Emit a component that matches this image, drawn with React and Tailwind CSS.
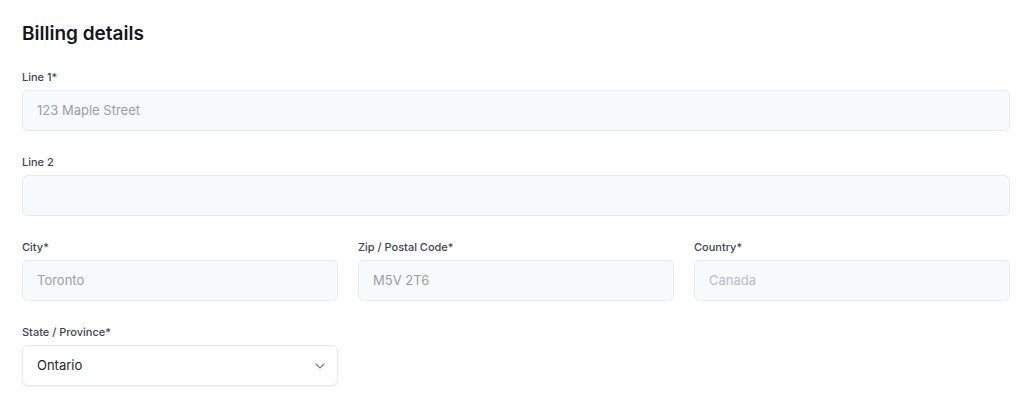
import React from "react";

function Field({ label, value, placeholder }) {
  return (
    <div className="flex flex-col">
      <label className="text-[11px] leading-4 font-medium text-[#3f4450] mb-[5px]">{label}</label>
      <div className="h-[41px] rounded-md border border-[#e8eaee] bg-[#f8f9fb] px-[14px] flex items-center text-[13px] text-[#9a9ea6]">
        {value}
        {placeholder && <span className="text-[#b9bcc2]">{placeholder}</span>}
      </div>
    </div>
  );
}

export default function App() {
  return (
    <div className="bg-white min-h-screen px-[22px] pt-[20px]" style={{ fontFamily: "Inter, 'Noto Sans', sans-serif" }}>
      <h2 className="text-[19px] leading-7 font-semibold text-[#14161c] mb-[21px]">Billing details</h2>

      <div className="flex flex-col gap-[23px]">
        <Field label="Line 1*" value="123 Maple Street" />
        <Field label="Line 2" value="" />

        <div className="grid grid-cols-3 gap-5">
          <Field label="City*" value="Toronto" />
          <Field label="Zip / Postal Code*" value="M5V 2T6" />
          <Field label="Country*" placeholder="Canada" />
        </div>

        <div className="grid grid-cols-3 gap-5">
          <div className="flex flex-col">
            <label className="text-[11px] leading-4 font-medium text-[#3f4450] mb-[5px]">State / Province*</label>
            <div className="h-[41px] rounded-md border border-[#e8eaee] bg-white shadow-[0_1px_2px_rgba(0,0,0,0.05)] pl-[14px] pr-[12px] flex items-center justify-between text-[13px] text-[#23262d]">
              <span>Ontario</span>
              <svg width="10" height="6" viewBox="0 0 10 6" fill="none">
                <path d="M1 1l4 4 4-4" stroke="#7b808a" strokeWidth="1.1" strokeLinecap="round" strokeLinejoin="round" />
              </svg>
            </div>
          </div>
        </div>
      </div>
    </div>
  );
}
